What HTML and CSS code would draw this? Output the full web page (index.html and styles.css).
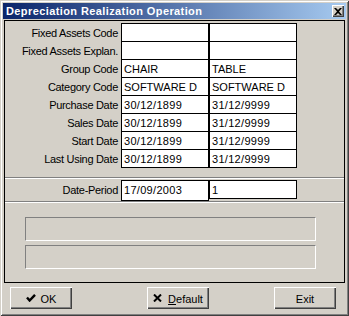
FILE: index.html
```html
<!DOCTYPE html>
<html>
  <head>
    <title>Depreciation Realization Operation</title>
    <link rel="stylesheet" href="styles.css">
  </head>
  <body>
    <div class="window">
      <div class="titlebar">
        <span class="title">Depreciation Realization Operation</span>
        <span class="close">
          <svg width="8" height="7" viewBox="0 0 8 7"><path d="M0 0h2l2 2 2-2h2L5 3.5 8 7H6L4 5 2 7H0l3-3.5z" fill="#000"/></svg>
        </span>
      </div>

      <div class="client">
        <div class="fields">
          <div class="row"><label>Fixed Assets Code</label><div class="box"></div><div class="box"></div></div>
          <div class="row"><label>Fixed Assets Explan.</label><div class="box"></div><div class="box"></div></div>
          <div class="row"><label>Group Code</label><div class="box">CHAIR</div><div class="box">TABLE</div></div>
          <div class="row"><label>Category Code</label><div class="box">SOFTWARE D</div><div class="box">SOFTWARE D</div></div>
          <div class="row"><label>Purchase Date</label><div class="box date">30/12/1899</div><div class="box date">31/12/9999</div></div>
          <div class="row"><label>Sales Date</label><div class="box date">30/12/1899</div><div class="box date">31/12/9999</div></div>
          <div class="row"><label>Start Date</label><div class="box date">30/12/1899</div><div class="box date">31/12/9999</div></div>
          <div class="row"><label>Last Using Date</label><div class="box date">30/12/1899</div><div class="box date">31/12/9999</div></div>
        </div>

        <div class="sep"></div>

        <div class="row period">
          <label>Date-Period</label>
          <div class="box date tall">17/09/2003</div>
          <div class="box">1</div>
        </div>

        <div class="sep flush"></div>

        <div class="status">
          <div class="slot"></div>
          <div class="slot"></div>
        </div>
      </div>

      <div class="buttons">
        <button class="btn">
          <svg width="10" height="8" viewBox="0 0 10 8"><path d="M1 3.5l2.6 3L9 0.8" fill="none" stroke="#000" stroke-width="2.4"/></svg>
          <span>OK</span>
        </button>
        <button class="btn default">
          <svg width="9" height="8" viewBox="0 0 9 8"><path d="M1 0.5l7 7M8 0.5l-7 7" fill="none" stroke="#000" stroke-width="2"/></svg>
          <span><u>D</u>efault</span>
        </button>
        <button class="btn exit"><span>Exit</span></button>
      </div>
    </div>
  </body>
</html>
```

FILE: styles.css
```css
/* base */
body {
    margin: 0;
    background-color: #d4d0c8;
    font-family: "Liberation Sans", Arial, sans-serif;
    font-size: 11px;
    color: #000;
}

/* dialog frame */
.window {
    width: 349px;
    height: 316px;
    box-sizing: border-box;
    padding: 3px;
    background-color: #d4d0c8;
    box-shadow: inset 1px 1px #d4d0c8, inset -1px -1px #404040,
        inset 2px 2px #fff, inset -2px -2px #808080;
}

/* title bar */
.titlebar {
    height: 16px;
    display: flex;
    align-items: center;
    padding-left: 3px;
    background: linear-gradient(to right, #0a246a, #a6caf0);
}

.title {
    flex: 1;
    color: #fff;
    font-weight: bold;
    line-height: 16px;
    letter-spacing: 0.4px;
}

.close {
    width: 12px;
    height: 12px;
    margin-right: 2px;
    display: flex;
    align-items: center;
    justify-content: center;
    background-color: #d4d0c8;
    box-shadow: inset 1px 1px #fff, inset -1px -1px #404040,
        inset -2px -2px #808080;
}

/* main panel */
.client {
    height: 263px;
    box-sizing: border-box;
    margin: 1px 1px 0;
    border: 1px solid #000;
    padding-top: 2px;
}

.row {
    display: grid;
    grid-template-columns: 116px 88px 88px;
    height: 18px;
}

.row label {
    text-align: right;
    padding-right: 3px;
    line-height: 20px;
    letter-spacing: -0.3px;
    white-space: nowrap;
}

.box {
    height: 19px;
    box-sizing: border-box;
    border: 1px solid #000;
    background-color: #fff;
    padding-left: 2px;
    line-height: 18px;
    white-space: nowrap;
    overflow: hidden;
}

.box.date {
    letter-spacing: 0.3px;
}

.period {
    height: 21px;
    margin-top: 1px;
}

.box.tall {
    height: 21px;
}

/* etched line */
.sep {
    height: 2px;
    box-sizing: border-box;
    border-top: 1px solid #808080;
    border-bottom: 1px solid #fff;
    margin-top: 10px;
}

.sep.flush {
    margin-top: 0;
}

.status {
    padding-top: 14px;
    display: flex;
    flex-direction: column;
    gap: 4px;
}

.slot {
    width: 291px;
    height: 24px;
    box-sizing: border-box;
    margin-left: 20px;
    border: 1px solid #808080;
    border-right-color: #fff;
    border-bottom-color: #fff;
}

/* buttons */
.buttons {
    display: flex;
    padding: 4px 0 0 7px;
}

.btn {
    width: 62px;
    height: 22px;
    box-sizing: border-box;
    display: flex;
    align-items: center;
    justify-content: center;
    gap: 5px;
    padding: 2px 0 0;
    border: none;
    background-color: #d4d0c8;
    font-family: inherit;
    font-size: 11px;
    color: #000;
    box-shadow: inset 1px 1px #fff, inset -1px -1px #404040,
        inset -2px -2px #808080;
}

.btn svg {
    margin-top: -2px;
}

.btn.default {
    margin-left: 75px;
    gap: 6px;
}

.btn.exit {
    margin-left: 65px;
}
```
